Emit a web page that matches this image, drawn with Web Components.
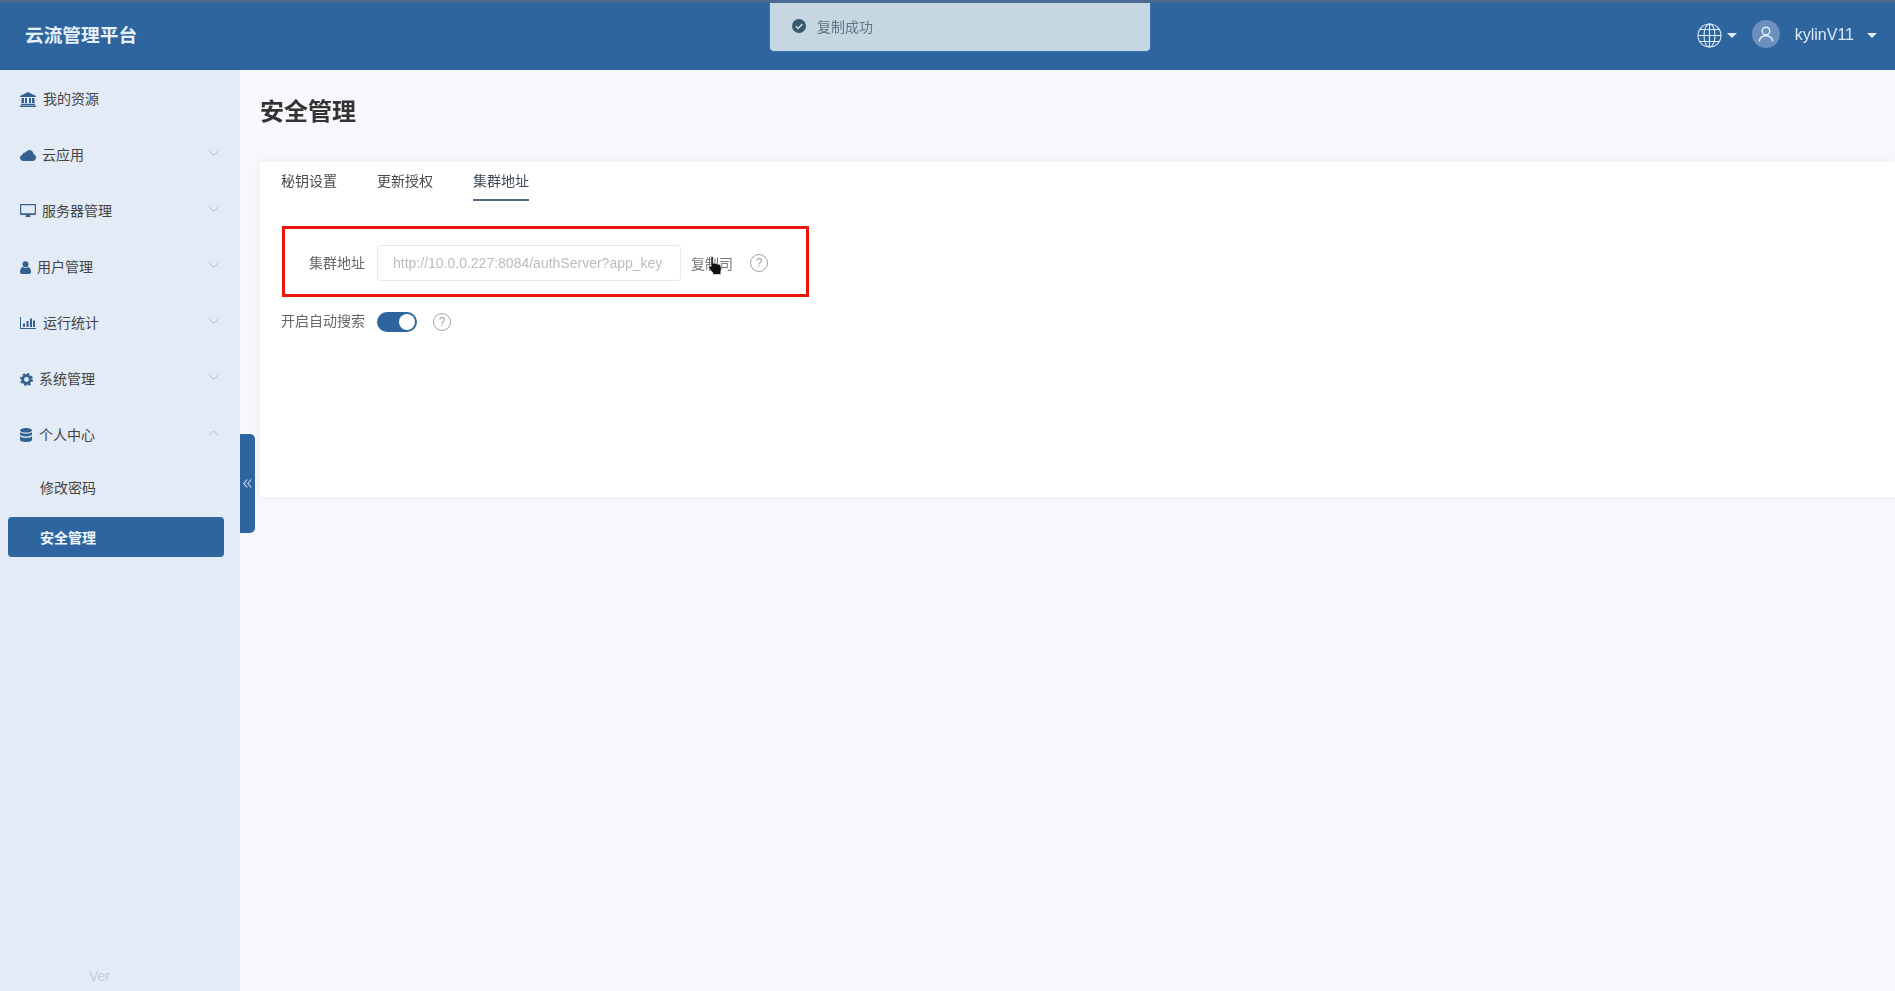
<!DOCTYPE html>
<html lang="zh-CN">
<head>
    <meta charset="utf-8">
    <title>云流管理平台</title>
    <style>
        html, body {
            margin: 0;
            height: 100%;
            overflow: hidden;
            font-family: "Liberation Sans", "Noto Sans CJK SC", sans-serif;
            font-size: 14px;
            background: #f7f8fb;
        }
    </style>
</head>
<body>
    <app-shell>
        <top-bar slot="top" brand="云流管理平台" user="kylinV11"></top-bar>
        <side-nav slot="side">
            <nav-item icon="bank" text-x="43">我的资源</nav-item>
            <nav-item icon="cloud" text-x="42" chevron="down">云应用</nav-item>
            <nav-item icon="desktop" text-x="42" chevron="down">服务器管理</nav-item>
            <nav-item icon="user" text-x="37" chevron="down">用户管理</nav-item>
            <nav-item icon="chart" text-x="43" chevron="down">运行统计</nav-item>
            <nav-item icon="cog" text-x="39" chevron="down">系统管理</nav-item>
            <nav-item icon="database" text-x="39" chevron="up">个人中心</nav-item>
            <sub-item>修改密码</sub-item>
            <sub-item active>安全管理</sub-item>
        </side-nav>
        <page-panel heading="安全管理">
            <tab-bar>
                <tab-item>秘钥设置</tab-item>
                <tab-item>更新授权</tab-item>
                <tab-item active>集群地址</tab-item>
            </tab-bar>
            <address-row label="集群地址" url="http://10.0.0.227:8084/authServer?app_key" action="复制司"></address-row>
            <search-row label="开启自动搜索"></search-row>
        </page-panel>
        <toast-message slot="over">复制成功</toast-message>
    </app-shell>

<script>
    const BLUE = '#2f659f';

    // icons drawn by hand, 16 units wide unless noted
    const ICONS = {
        bank: '<svg width="16" height="15" viewBox="0 0 16 15"><path fill="currentColor" d="M8 0 16 4V5H0V4ZM1.5 6H4V11H1.5ZM5 6H7V11H5ZM9 6H11V11H9ZM12 6H14.500V11H12ZM1 11.800H15V13H1ZM0 13.600H16V15H0Z"/></svg>',
        cloud: '<svg width="16" height="11" viewBox="0 0 16 11"><path fill="currentColor" d="M3.500 11C1.500 11 0 9.600 0 7.800 0 6.300 1 5.100 2.400 4.700 2.700 3 4.200 2.200 5.500 2.500 6.400 .9 7.900 0 9.500 0 11.800 0 13.400 1.800 13.400 4.100 15 4.600 16 5.900 16 7.500 16 9.500 14.500 11 12.500 11Z"/></svg>',
        desktop: '<svg width="16" height="14" viewBox="0 0 16 14"><path fill="currentColor" fill-rule="evenodd" d="M1 0H15A1 1 0 0 1 16 1V10A1 1 0 0 1 15 11H10L10.500 13H5.500L6 11H1A1 1 0 0 1 0 10V1A1 1 0 0 1 1 0ZM1.200 1.200V9.300H14.800V1.200Z"/></svg>',
        user: '<svg width="11" height="13" viewBox="0 0 11 13"><circle cx="5.500" cy="3.200" r="3" fill="currentColor"/><path fill="currentColor" d="M0 11C0 8 1.300 6.200 3 6 4.500 7.200 6.500 7.200 8 6 9.700 6.200 11 8 11 11 11 12.300 10.200 13 9 13H2C.8 13 0 12.300 0 11Z"/></svg>',
        chart: '<svg width="16" height="12" viewBox="0 0 16 12"><path fill="currentColor" d="M0 0H1V11H16V12H0ZM3 6.500H5V10H3ZM6.500 4H8.500V10H6.500ZM10 1.500H12V10H10ZM13 3.500H15V10H13Z"/></svg>',
        cog: '<svg width="13" height="13" viewBox="0 0 13 13"><circle cx="6.500" cy="6.500" r="3.800" fill="none" stroke="currentColor" stroke-width="2.700"/><circle cx="6.500" cy="6.500" r="5.500" fill="none" stroke="currentColor" stroke-width="2" stroke-dasharray="2.300 2"/></svg>',
        database: '<svg width="12" height="14" viewBox="0 0 12 14"><ellipse cx="6" cy="2.300" rx="6" ry="2.300" fill="currentColor"/><path fill="currentColor" d="M0 4C1 5.300 3.500 5.700 6 5.700S11 5.300 12 4V6.300C12 7.600 9.300 8.500 6 8.500S0 7.600 0 6.300ZM0 8.300C1 9.600 3.500 10 6 10S11 9.600 12 8.300V11.700C12 13 9.300 14 6 14S0 13 0 11.700Z"/></svg>'
    };

    function makeShadow(el, html) {
        el.attachShadow({ mode: 'open' }).innerHTML = html;
    }

    class AppShell extends HTMLElement {
        constructor() {
            super();
            makeShadow(this, `
                <style>
                    :host { display: grid; grid-template: 70px 1fr / 240px 1fr; height: 991px; position: relative; filter: blur(.4px); }
                    .top { grid-column: 1 / 3; }
                    .handle {
                        position: absolute; left: 240px; top: 434px; width: 15px; height: 99px;
                        background: ${BLUE}; border-radius: 0 5px 5px 0; color: #cfe2f5;
                        display: flex; align-items: center; justify-content: center;
                    }
                    .pointer { position: absolute; left: 708px; top: 256px; }
                </style>
                <div class="top"><slot name="top"></slot></div>
                <slot name="side"></slot>
                <slot></slot>
                <div class="handle">
                    <svg width="9" height="9" viewBox="0 0 9 9" fill="none" stroke="currentColor" stroke-width="1.100"><path d="M4.200 .5 .8 4.500 4.200 8.500M8.200 .5 4.800 4.500 8.200 8.500"/></svg>
                </div>
                <slot name="over"></slot>
                <svg class="pointer" width="15" height="20" viewBox="0 0 15 20">
                    <path fill="#111" stroke="#fff" stroke-width=".6" d="M3 1.500C3 .3 5.200 .3 5.200 1.500V7.500C6 6.800 7.300 7 7.600 7.800 8.400 7.300 9.700 7.500 10 8.400 10.800 7.900 12.300 8.300 12.500 9.500 13.500 11 13.400 14 12.800 16V18.500H5V17C3.500 15.500 1.200 13 .7 11.300.3 10 1.700 9.300 3 10.700Z"/>
                </svg>
            `);
        }
    }

    class TopBar extends HTMLElement {
        constructor() {
            super();
            makeShadow(this, `
                <style>
                    :host {
                        display: flex; align-items: center; height: 70px; box-sizing: border-box;
                        padding: 0 18px 3px 25px; background: ${BLUE}; border-top: 3px solid #4a6a92;
                        color: #dbe9f8;
                    }
                    .brand { font-size: 18.700px; font-weight: 700; flex: 1; color: #e6f0f9; margin-bottom: 4px; }
                    .globe { display: block; margin-right: 5px; }
                    .caret { width: 0; height: 0; border: 5px solid transparent; border-top: 5px solid #e3eef9; border-bottom: 0; }
                    .avatar {
                        width: 28px; height: 28px; border-radius: 50%; background: #6c90bd; margin: -3px 15.200px 0 14.200px;
                        display: flex; align-items: center; justify-content: center;
                    }
                    .name { font-size: 16px; margin-right: 13px; }
                </style>
                <div class="brand">${this.getAttribute('brand')}</div>
                <svg class="globe" width="25" height="25" viewBox="0 0 25 25" fill="none" stroke="#dcebfa" stroke-width="1.100">
                    <circle cx="12.500" cy="12.500" r="11.500"/>
                    <ellipse cx="12.500" cy="12.500" rx="5.500" ry="11.500"/>
                    <path d="M12.500 1V24M1 12.500H24M2.800 6.500H22.200M2.800 18.500H22.200"/>
                </svg>
                <div class="caret"></div>
                <div class="avatar">
                    <svg width="16" height="16" viewBox="0 0 16 16" fill="none" stroke="#e6f0fa" stroke-width="1.400"><circle cx="8" cy="5" r="3.800"/><path d="M1.200 15.300C1.800 11.800 4.200 9.800 8 9.800S14.200 11.800 14.800 15.300"/></svg>
                </div>
                <div class="name">${this.getAttribute('user')}</div>
                <div class="caret"></div>
            `);
        }
    }

    class SideNav extends HTMLElement {
        constructor() {
            super();
            makeShadow(this, `
                <style>
                    :host { display: flex; flex-direction: column; background: #e3ebf6; padding-top: 1px; position: relative; }
                    .ver { position: absolute; left: 89px; top: 898px; color: #c6ced9; }
                </style>
                <slot></slot>
                <div class="ver">Ver</div>
            `);
        }
    }

    class NavItem extends HTMLElement {
        constructor() {
            super();
            const chevron = this.getAttribute('chevron');
            const path = chevron === 'up' ? 'M1 5.500 5.500 1 10 5.500' : 'M1 1 5.500 5.500 10 1';
            makeShadow(this, `
                <style>
                    :host { display: flex; align-items: center; height: 56px; padding: 0 21px 0 20px; color: #444; position: relative; }
                    .icon { color: #33618f; width: ${this.getAttribute('text-x') - 20}px; display: flex; align-items: center; flex: none; }
                    .label { flex: 1; margin-top: -2px; }
                    .chev { margin-top: -4px; display: block; }
                </style>
                <span class="icon">${ICONS[this.getAttribute('icon')]}</span>
                <span class="label"><slot></slot></span>
                ${chevron ? `<svg class="chev" width="11" height="7" viewBox="0 0 11 7" fill="none" stroke="#b3bcc8"><path d="${path}"/></svg>` : ''}
            `);
        }
    }

    class SubItem extends HTMLElement {
        constructor() {
            super();
            makeShadow(this, `
                <style>
                    :host {
                        display: flex; align-items: center; height: 40px; margin: 4px 16px 6px 8px;
                        padding-left: 32px; border-radius: 4px; color: #444;
                    }
                    :host([active]) { background: ${BLUE}; color: #f1f7fd; font-weight: 700; }
                </style>
                <slot></slot>
            `);
        }
    }

    class PagePanel extends HTMLElement {
        constructor() {
            super();
            makeShadow(this, `
                <style>
                    :host { display: block; padding-left: 20px; min-width: 0; }
                    h1 { margin: 0; height: 92px; line-height: 83px; font-size: 24px; font-weight: 700; color: #333; }
                    .card { background: #fff; height: 335px; padding-left: 21px; box-shadow: 0 0 8px rgba(120,130,150,.08); }
                </style>
                <h1>${this.getAttribute('heading')}</h1>
                <div class="card"><slot></slot></div>
            `);
        }
    }

    class TabBar extends HTMLElement {
        constructor() {
            super();
            makeShadow(this, `
                <style>:host { display: flex; gap: 40px; height: 39px; }</style>
                <slot></slot>
            `);
        }
    }

    class TabItem extends HTMLElement {
        constructor() {
            super();
            makeShadow(this, `
                <style>
                    :host { display: block; height: 39px; box-sizing: border-box; line-height: 38px; color: #4a4a4a; }
                    :host([active]) { border-bottom: 2px solid #4d6a8a; color: #3d4a58; }
                </style>
                <slot></slot>
            `);
        }
    }

    class HelpIcon extends HTMLElement {
        constructor() {
            super();
            makeShadow(this, `
                <style>
                    :host {
                        display: flex; align-items: center; justify-content: center; width: 18px; height: 18px;
                        box-sizing: border-box; border: 1.500px solid #a3a3a3; border-radius: 50%;
                        color: #a3a3a3; font-size: 12px; line-height: 1;
                    }
                </style>
                ?
            `);
        }
    }

    class AddressRow extends HTMLElement {
        constructor() {
            super();
            makeShadow(this, `
                <style>
                    :host {
                        display: flex; align-items: center; width: 527px; height: 71px; box-sizing: border-box;
                        margin: 25px 0 0 1px; padding-top: 3px; border: 3px solid #e8160c; color: #666;
                    }
                    .label { width: 80px; text-align: right; margin: -2px 12px 0 0; flex: none; }
                    .field {
                        width: 304px; height: 36px; box-sizing: border-box; padding: 0 15px; flex: none;
                        border: 1px solid #e9e9e9; border-radius: 3px; line-height: 34px; color: #bcbcbc;
                        white-space: nowrap;
                    }
                    .action { margin: 0 17px 0 10px; color: #777; }
                </style>
                <span class="label">${this.getAttribute('label')}</span>
                <div class="field">${this.getAttribute('url')}</div>
                <span class="action">${this.getAttribute('action')}</span>
                <help-icon></help-icon>
            `);
        }
    }

    class ToggleSwitch extends HTMLElement {
        constructor() {
            super();
            makeShadow(this, `
                <style>
                    :host { display: block; width: 40px; height: 20px; border-radius: 10px; background: ${BLUE}; position: relative; }
                    i { position: absolute; right: 2px; top: 2px; width: 16px; height: 16px; border-radius: 50%; background: #fff; }
                </style>
                <i></i>
            `);
        }
    }

    class SearchRow extends HTMLElement {
        constructor() {
            super();
            makeShadow(this, `
                <style>
                    :host { display: flex; align-items: center; height: 20px; margin-top: 15px; color: #666; }
                    .label { width: 84px; margin: -5px 12px 0 0; }
                    toggle-switch { margin-right: 16px; }
                </style>
                <span class="label">${this.getAttribute('label')}</span>
                <toggle-switch></toggle-switch>
                <help-icon></help-icon>
            `);
        }
    }

    class ToastMessage extends HTMLElement {
        constructor() {
            super();
            makeShadow(this, `
                <style>
                    :host {
                        position: absolute; left: 770px; top: 3px; width: 380px; height: 47px; box-sizing: border-box;
                        display: flex; align-items: center; gap: 11px; padding: 0 0 1px 22px; border-radius: 0 0 4px 4px;
                        background: #c6d7e2; color: #5d7580; box-shadow: 0 1px 1px #cfe3f5;
                    }
                </style>
                <svg width="14" height="14" viewBox="0 0 14 14">
                    <circle cx="7" cy="7" r="7" fill="#38596e"/>
                    <path d="M3.800 7.200 6.100 9.400 10.300 5" fill="none" stroke="#d5e2ea" stroke-width="1.400"/>
                </svg>
                <slot></slot>
            `);
        }
    }

    customElements.define('app-shell', AppShell);
    customElements.define('top-bar', TopBar);
    customElements.define('side-nav', SideNav);
    customElements.define('nav-item', NavItem);
    customElements.define('sub-item', SubItem);
    customElements.define('page-panel', PagePanel);
    customElements.define('tab-bar', TabBar);
    customElements.define('tab-item', TabItem);
    customElements.define('help-icon', HelpIcon);
    customElements.define('address-row', AddressRow);
    customElements.define('toggle-switch', ToggleSwitch);
    customElements.define('search-row', SearchRow);
    customElements.define('toast-message', ToastMessage);
</script>
</body>
</html>
